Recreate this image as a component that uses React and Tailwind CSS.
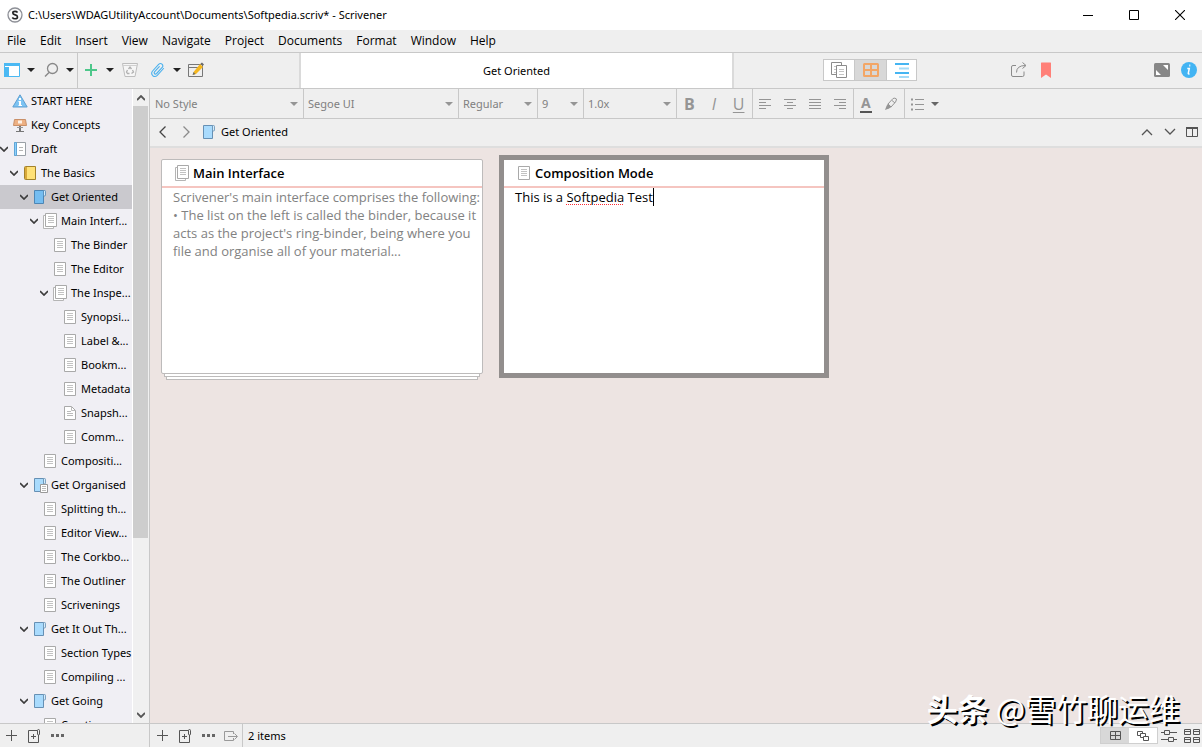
import clsx from 'clsx';

const MENUS = ['File', 'Edit', 'Insert', 'View', 'Navigate', 'Project', 'Documents', 'Format', 'Window', 'Help'];

const INDENTS = ['pl-0', 'pl-[10px]', 'pl-[20px]', 'pl-[30px]', 'pl-[40px]', 'pl-[50px]'];

const BINDER = [
  { title: 'START HERE', level: 0, icon: 'info' },
  { title: 'Key Concepts', level: 0, icon: 'easel' },
  { title: 'Draft', level: 0, icon: 'draft', open: true },
  { title: 'The Basics', level: 1, icon: 'book', open: true },
  { title: 'Get Oriented', level: 2, icon: 'folderDark', open: true, selected: true },
  { title: 'Main Interf...', level: 3, icon: 'stack', open: true },
  { title: 'The Binder', level: 4, icon: 'doc' },
  { title: 'The Editor', level: 4, icon: 'doc' },
  { title: 'The Inspe...', level: 4, icon: 'stack', open: true },
  { title: 'Synopsi...', level: 5, icon: 'doc' },
  { title: 'Label &...', level: 5, icon: 'doc' },
  { title: 'Bookm...', level: 5, icon: 'doc' },
  { title: 'Metadata', level: 5, icon: 'doc' },
  { title: 'Snapsh...', level: 5, icon: 'docFold' },
  { title: 'Comm...', level: 5, icon: 'doc' },
  { title: 'Compositi...', level: 3, icon: 'doc' },
  { title: 'Get Organised', level: 2, icon: 'folderDoc', open: true },
  { title: 'Splitting th...', level: 3, icon: 'doc' },
  { title: 'Editor View...', level: 3, icon: 'doc' },
  { title: 'The Corkbo...', level: 3, icon: 'doc' },
  { title: 'The Outliner', level: 3, icon: 'doc' },
  { title: 'Scrivenings', level: 3, icon: 'doc' },
  { title: 'Get It Out Th...', level: 2, icon: 'folder', open: true },
  { title: 'Section Types', level: 3, icon: 'doc' },
  { title: 'Compiling ...', level: 3, icon: 'doc' },
  { title: 'Get Going', level: 2, icon: 'folder', open: true },
  { title: 'Creatin...', level: 3, icon: 'doc' },
];

const Svg = ({ w = 16, h = 16, children, className }) => (
  <svg
    width={w}
    height={h}
    viewBox={`0 0 ${w} ${h}`}
    fill="none"
    aria-hidden="true"
    className={clsx('shrink-0', className)}
  >
    {children}
  </svg>
);

const folderShape = (fill, stroke = '#6690b4') => (
  <>
    <path d="M2.5 1.5h9v13h-9z" fill={fill} stroke={stroke} />
    <path d="M11.5 1.5h1.2q.8 0 .8 1v3.5q0 1-1 1t-1-1z" fill="#d5ecfb" stroke={stroke} strokeWidth=".8" />
  </>
);

const ITEM_ICONS = {
  info: (
    <>
      <path d="M8 1.8 15.2 14H.8z" fill="#7cc3f3" stroke="#5f9fd0" strokeLinejoin="round" />
      <path d="M7 5h2v2H7zM6.500 8H9v4h1v1H6.500v-1H7V9h-.5z" fill="#fff" />
    </>
  ),
  easel: (
    <>
      <path d="M8 8v6" stroke="#777" strokeWidth="2" />
      <path d="M4 14.500h8" stroke="#777" />
      <path d="M5 10.500h6" stroke="#999" />
      <path d="M2.500 2.500h11l1 6h-13z" fill="#edb083" stroke="#c98f68" />
      <path d="M6 3.500h4v3H6z" fill="#fdf1e6" />
    </>
  ),
  draft: (
    <>
      <path d="M2.500 1.500h11v13h-11z" fill="#fff" stroke="#9aa0a6" />
      <path d="M2.500 1.500h2v13h-2z" fill="#8fd0fa" stroke="#5fa6d8" />
      <path d="M7 6.500h4M7 9.500h4" stroke="#b5b5b5" />
    </>
  ),
  book: (
    <>
      <path d="M2.500 2.500q0-1 1-1h10v13h-10q-1 0-1-1z" fill="#ffe177" stroke="#a3822b" />
      <path d="M3 2h2v12H3z" fill="#d9a93a" />
    </>
  ),
  folder: folderShape('#a9dbfd'),
  folderDark: folderShape('#74bdf1', '#4d86b5'),
  folderDoc: (
    <>
      {folderShape('#a9dbfd')}
      <path d="M8.500 7.500h7v8h-7z" fill="#fff" stroke="#999" />
      <path d="M10 9.500h4M10 11.500h4M10 13.500h4" stroke="#bbb" />
    </>
  ),
  doc: (
    <>
      <path d="M2.500 1.500h11v13h-11z" fill="#fff" stroke="#a9a9a9" />
      <path d="M5 4.500h6M5 6.500h6M5 8.500h6M5 10.500h6" stroke="#c2c2c2" />
    </>
  ),
  docFold: (
    <>
      <path d="M2.500 1.500h7l4 4v9h-11z" fill="#fff" stroke="#a9a9a9" />
      <path d="M9.500 1.500v4h4M5 6.500h4M5 8.500h6M5 10.500h6" stroke="#bbb" />
    </>
  ),
  stack: (
    <>
      <path d="M1.500 2.500h10v13h-10z" fill="#fff" stroke="#b5b5b5" />
      <path d="M3.500 .5h11v13h-11z" fill="#fff" stroke="#a9a9a9" />
      <path d="M6 3.500h6M6 5.500h6M6 7.500h6M6 9.500h6" stroke="#c2c2c2" />
    </>
  ),
};

const ItemIcon = ({ name }) => <Svg>{ITEM_ICONS[name]}</Svg>;

const Caret = ({ className }) => (
  <Svg w={8} h={4} className={className}>
    <path d="M0 0h8L4 4z" fill="currentColor" />
  </Svg>
);

const IconButton = ({ label, className, children }) => (
  <button type="button" aria-label={label} className={clsx('flex items-center justify-center', className)}>
    {children}
  </button>
);

const TitleBar = () => (
  <header className="flex h-[30px] shrink-0 items-center bg-white pl-[7px]">
    <Svg>
      <circle cx="8" cy="8" r="7" fill="#fafafa" stroke="#8d8f96" strokeWidth="1.300" />
      <path
        d="M10.600 5.600Q9.600 4.400 8 4.400q-2.200 0-2.200 1.600 0 1.300 2.400 1.900 2.300.6 2.300 2 0 1.800-2.500 1.800-1.700 0-2.700-1.300"
        stroke="#222"
        strokeWidth="1.600"
      />
    </Svg>
    <h1 className="ml-[5px] flex-1 whitespace-nowrap">
      C:\Users\WDAGUtilityAccount\Documents\Softpedia.scriv* - Scrivener
    </h1>
    <IconButton label="Minimize" className="h-full w-[46px]">
      <Svg w={10} h={10}><path d="M0 5.500h10" stroke="#000" /></Svg>
    </IconButton>
    <IconButton label="Maximize" className="h-full w-[46px]">
      <Svg w={10} h={10}><path d="M.5.5h9v9h-9z" stroke="#000" /></Svg>
    </IconButton>
    <IconButton label="Close" className="h-full w-[45px]">
      <Svg w={10} h={10}><path d="m0 0 10 10M10 0 0 10" stroke="#000" strokeWidth="1.100" /></Svg>
    </IconButton>
  </header>
);

const MenuBar = () => (
  <nav className="flex h-[23px] shrink-0 items-center border-b border-[#c8c8c8] font-['Open_Sans',sans-serif] text-[12px]">
    {MENUS.map((menu) => (
      <button key={menu} type="button" className="px-[7px]">
        {menu}
      </button>
    ))}
  </nav>
);

const MainToolbar = () => (
  <div className="flex h-9 shrink-0 border-b border-[#c8c8c8]">
    <div className="flex w-[299px] shrink-0 items-center text-[#222]">
      <div className="flex h-full w-[78px] items-center border-r border-[#c8c8c8] pb-px pl-1">
        <IconButton label="Layouts">
          <Svg>
            <path d="M.5 1.500h15v13H.5z" fill="#fff" stroke="#4bb9f3" />
            <path d="M0 1h16v3H0zM0 5h5v10H0z" fill="#4bb9f3" />
          </Svg>
          <Caret className="ml-[7px]" />
        </IconButton>
        <IconButton label="Search" className="ml-[9px]">
          <Svg>
            <circle cx="8.500" cy="6.500" r="5" stroke="#888" strokeWidth="1.300" />
            <path d="m5 10.500-4 4" stroke="#888" strokeWidth="1.500" />
          </Svg>
          <Caret className="ml-[6px]" />
        </IconButton>
      </div>
      <div className="flex h-full items-center pb-px pl-[6px]">
        <IconButton label="Add">
          <Svg w={14} h={14}><path d="M7 1v12M1 7h12" stroke="#4dc78a" strokeWidth="2" /></Svg>
          <Caret className="ml-[8px]" />
        </IconButton>
        <IconButton label="Move to trash" className="ml-[8px]">
          <Svg>
            <path d="M.5 1.500h15l-2.500 13H3z" fill="#f6f6f6" stroke="#bdbdbd" />
            <path d="M1 3.500h14" stroke="#d0d0d0" />
            <path d="m6.500 7 1.500-2 1.500 2M10.500 8l1 2-2 1.500M7.500 11.500h-2l-1-1.500 1-2" stroke="#b0b0b0" strokeWidth="1.300" />
          </Svg>
        </IconButton>
        <IconButton label="Attach" className="ml-[12px]">
          <Svg>
            <path
              d="m13.500 6.500-6.200 6.800q-2.200 2.200-4.500.4-2.200-2.300-.2-4.700l6-6.600q1.700-1.600 3.400-.3 1.600 1.700.2 3.400l-5.600 6q-1 1-2 .2-.9-1 .1-2.100l4.600-5"
              stroke="#4bb1ee"
              strokeWidth="1.100"
              strokeLinecap="round"
            />
          </Svg>
          <Caret className="ml-[7px]" />
        </IconButton>
        <IconButton label="Compose" className="ml-[7px]">
          <Svg>
            <path d="M.5 2.500h14v12H.5zM1 5.500h11" stroke="#777" />
            <path d="m12 2 3 3-7 7-3 1 1-3.500z" fill="#f5b71f" />
            <path d="m12.500 1.500 1.500-1 2 2-1.500 1.500zM5.500 10l2 2-3 1z" fill="#6b6b6b" />
          </Svg>
        </IconButton>
      </div>
    </div>
    <div className="flex flex-1 items-center justify-center border-x-2 border-[#dadada] bg-white">Get Oriented</div>
    <div className="flex w-[468px] shrink-0 items-center pr-[5px] pb-px pl-[89px]">
      <div className="flex h-[22px] divide-x divide-[#c8c8c8] border border-[#c8c8c8] bg-white">
        <IconButton label="Scrivenings view" className="w-[31px]">
          <Svg>
            <path d="M.5.5h10v12H.5z" fill="#fff" stroke="#8c8c8c" />
            <path d="M3 4.500h4M3 7.500h4M3 10.500h4" stroke="#c4c4c4" />
            <path d="M5.500 3.500h10v12h-10z" fill="#fff" stroke="#8c8c8c" />
            <path d="M8 7.500h5M8 9.500h5M8 12.500h5" stroke="#c4c4c4" />
          </Svg>
        </IconButton>
        <IconButton label="Corkboard view" className="w-[32px] bg-[#d8d8d8]">
          <Svg>
            <rect x="1" y="2" width="14" height="12" rx=".5" stroke="#f3a666" strokeWidth="2" />
            <path d="M8 2v12M1 8h14" stroke="#f3a666" strokeWidth="2" />
          </Svg>
        </IconButton>
        <IconButton label="Outliner view" className="w-[29px]">
          <Svg>
            <path d="M1 2h14M1 11h14" stroke="#45b5f2" strokeWidth="2" />
            <path d="M5 6.500h10M5 15h10" stroke="#a4dbf8" strokeWidth="2" />
          </Svg>
        </IconButton>
      </div>
      <IconButton label="Export" className="ml-[94px]">
        <Svg>
          <path d="M5 3.500H2q-1.500 0-1.500 1.500v8q0 1.500 1.500 1.500h9.500q1.500 0 1.500-1.500V9.500" stroke="#8a8a8a" />
          <path d="M5.500 10.500q0-7 9-7M11.500.5l3.500 3-3.500 3" stroke="#8a8a8a" />
        </Svg>
      </IconButton>
      <IconButton label="Bookmarks" className="ml-[14px]">
        <Svg w={10}>
          <path d="M0 1q0-.5.500-.5h9q.5 0 .5.500v15l-5-3.500L0 16z" fill="#ff8078" />
        </Svg>
      </IconButton>
      <IconButton label="Full screen" className="ml-auto">
        <Svg>
          <rect y="1" width="16" height="14" rx="1.500" fill="#878787" />
          <path d="M9 3h5v5zM2 8l5 5H2z" fill="#fff" />
          <path d="m9.500 6.500 2 0 0 2M6.500 9.500l-2 0 0-2" stroke="#878787" />
        </Svg>
      </IconButton>
      <IconButton label="Inspector" className="ml-[11px]">
        <Svg>
          <circle cx="8" cy="8" r="8" fill="#43b4f3" />
          <path d="M9.300 3.200h-1M9.300 3.800h-1" stroke="#fff" strokeWidth="1.600" />
          <path d="M6.300 6.500h2l-1 4.700q-.2 1 1.200.6" stroke="#fff" strokeWidth="1.500" />
        </Svg>
      </IconButton>
    </div>
  </div>
);

const FormatSelect = ({ label, value, className }) => (
  <div className={clsx('grid items-center border-r border-[#c8c8c8]', className)}>
    <select
      aria-label={label}
      defaultValue={value}
      className="col-start-1 row-start-1 h-full w-full appearance-none bg-transparent pl-1 text-[#808080] outline-none"
    >
      <option>{value}</option>
    </select>
    <Caret className="pointer-events-none col-start-1 row-start-1 mr-[5px] justify-self-end text-[#959595]" />
  </div>
);

const ALIGNMENTS = [
  { label: 'Align left', d: 'M1 3.500h12M1 6.500h7M1 9.500h12M1 12.500h7' },
  { label: 'Align center', d: 'M1 3.500h12M4 6.500h6M1 9.500h12M4 12.500h6' },
  { label: 'Justify', d: 'M1 3.500h12M1 6.500h12M1 9.500h12M1 12.500h12' },
  { label: 'Align right', d: 'M1 3.500h12M6 6.500h7M1 9.500h12M6 12.500h7' },
];

const FormatBar = () => (
  <div className="flex h-[30px] shrink-0 border-b border-[#c8c8c8] text-[#959595]">
    <FormatSelect label="Style" value="No Style" className="w-[154px] pl-[1px]" />
    <FormatSelect label="Font" value="Segoe UI" className="w-[155px]" />
    <FormatSelect label="Weight" value="Regular" className="w-[79px]" />
    <FormatSelect label="Size" value="9" className="w-[46px]" />
    <FormatSelect label="Line spacing" value="1.0x" className="w-[93px]" />
    <div className="flex w-[76px] items-center justify-around border-r border-[#c8c8c8] pr-px font-['Open_Sans',sans-serif] text-base">
      <button type="button" className="w-5 font-bold">B</button>
      <button type="button" className="w-5 font-medium italic">I</button>
      <button type="button" className="w-5 underline underline-offset-2">U</button>
    </div>
    <div className="flex w-[101px] items-center justify-around border-r border-[#c8c8c8] pr-px">
      {ALIGNMENTS.map(({ label, d }) => (
        <IconButton key={label} label={label}>
          <Svg w={14}><path d={d} stroke="currentColor" /></Svg>
        </IconButton>
      ))}
    </div>
    <div className="flex w-[51px] items-center justify-around border-r border-[#c8c8c8]">
      <button type="button" className="h-[18px] border-b-2 border-[#555] px-px text-sm leading-4 font-bold">
        A
      </button>
      <IconButton label="Highlight">
        <Svg w={14} h={14}>
          <path d="m4 7 5-5.500q2-1 3.500.5-.5 2.500-1 3L7 10z" stroke="#959595" />
          <path d="M4 6.500 7.500 10 5 11.500 1 13l1.500-4z" fill="#959595" />
          <path d="M8 3.500 11 6" stroke="#959595" />
        </Svg>
      </IconButton>
    </div>
    <IconButton label="List" className="ml-[5px]">
      <Svg w={14}>
        <path d="M5 3.500h9M5 8.500h9M5 13.500h9" stroke="#959595" />
        <path d="M1 2.500h2v2H1zM1 7.500h2v2H1zM1 12.500h2v2H1z" fill="#959595" />
      </Svg>
      <Caret className="ml-[7px] text-[#666]" />
    </IconButton>
  </div>
);

const EditorHeader = () => (
  <div className="flex h-[29px] shrink-0 items-center border-b-2 border-[#dedede] pr-[4px] pb-[2px] pl-[9px]">
    <IconButton label="Back">
      <Svg w={8} h={12}><path d="M6.500.5 1 6l5.500 5.500" stroke="#444" strokeWidth="1.300" /></Svg>
    </IconButton>
    <IconButton label="Forward" className="ml-[15px]">
      <Svg w={8} h={12}><path d="M1.500.5 7 6l-5.500 5.500" stroke="#8b8b8b" strokeWidth="1.300" /></Svg>
    </IconButton>
    <span className="ml-[11px] flex items-center gap-[4px]">
      <ItemIcon name="folder" />
      Get Oriented
    </span>
    <IconButton label="Previous document" className="ml-auto">
      <Svg w={12} h={8}><path d="m1 7 5-5 5 5" stroke="#555" strokeWidth="1.300" /></Svg>
    </IconButton>
    <IconButton label="Next document" className="ml-[11px]">
      <Svg w={12} h={8}><path d="m1 1 5 5 5-5" stroke="#555" strokeWidth="1.300" /></Svg>
    </IconButton>
    <IconButton label="Split editor" className="ml-[10px]">
      <Svg w={12} h={10}>
        <path d="M.5.5h11v9H.5zM6.500 1v8" stroke="#555" />
        <path d="M0 1h12" stroke="#555" strokeWidth="2" />
      </Svg>
    </IconButton>
  </div>
);

const BinderRow = ({ item }) => (
  <li className={clsx('h-6', item.selected && 'bg-[#cac9ce]')}>
    <a href="#" className={clsx('flex h-full items-center whitespace-nowrap', INDENTS[item.level])}>
      <Svg w={8} h={6} className="mr-[4px]">
        {item.open && <path d="m0 1 4 4 4-4" stroke="#3c3c3c" strokeWidth="1.700" />}
      </Svg>
      <ItemIcon name={item.icon} />
      <span className="ml-[3px]">{item.title}</span>
    </a>
  </li>
);

const Scrollbar = () => (
  <div className="flex w-[17px] shrink-0 flex-col border-l border-white bg-[#f0f0f0] pr-px">
    <IconButton label="Scroll up" className="h-[17px]">
      <Svg w={8} h={6}><path d="m0 5 4-4 4 4" stroke="#555" strokeWidth="1.800" /></Svg>
    </IconButton>
    <div className="min-h-0 flex-1">
      <div className="h-[72%] bg-[#cdcdcd]" />
    </div>
    <IconButton label="Scroll down" className="h-[17px]">
      <Svg w={8} h={6}><path d="m0 1 4 4 4-4" stroke="#555" strokeWidth="1.800" /></Svg>
    </IconButton>
  </div>
);

const FooterActions = () => (
  <>
    <IconButton label="Add item">
      <Svg w={11} h={11}><path d="M5.500 0v11M0 5.500h11" stroke="#555" /></Svg>
    </IconButton>
    <IconButton label="Add folder" className="ml-[11px]">
      <Svg w={13} h={14}>
        <path d="M9.500 1.500h-9v12h10V6M5.500 5v5M3 7.500h5" stroke="#555" />
        <path d="M9.500 1.500q0-1 1-1t1 1V5q0 1-1 1t-1-1z" stroke="#555" />
      </Svg>
    </IconButton>
    <IconButton label="More actions" className="ml-[10px]">
      <Svg w={13} h={3}>
        <path d="M0 0h3v3H0zM5 0h3v3H5zM10 0h3v3h-3z" fill="#666" />
      </Svg>
    </IconButton>
  </>
);

const Binder = () => (
  <aside className="flex w-[150px] shrink-0 flex-col border-r border-[#c8c8c8]">
    <div className="flex min-h-0 flex-1">
      <ul className="min-w-0 flex-1 overflow-hidden bg-[#f0eff4]">
        {BINDER.map((item) => (
          <BinderRow key={item.title} item={item} />
        ))}
      </ul>
      <Scrollbar />
    </div>
    <div className="flex h-6 shrink-0 items-center border-t border-[#c8c8c8] pl-[6px]">
      <FooterActions />
    </div>
  </aside>
);

const Card = ({ icon, title, selected, children }) => (
  <article
    className={clsx(
      'h-[215px] border bg-white',
      selected ? 'border-[#928e8d] ring-4 ring-[#928e8d]' : 'rounded-xs border-[#bdbbbb]',
    )}
  >
    <h2 className="flex h-[28px] items-center gap-[3px] border-b-2 border-[#f5c5c0] pl-[12px] font-semibold">
      <ItemIcon name={icon} />
      {title}
    </h2>
    {children}
  </article>
);

const Corkboard = () => (
  <main className="flex min-h-0 flex-1 flex-wrap content-start gap-5 overflow-hidden bg-[#ede4e2] p-[11px] font-['Open_Sans',sans-serif] text-[13px] leading-[18px]">
    <div className="w-[322px]">
      <Card icon="stack" title="Main Interface">
        <p className="pl-[11px] whitespace-nowrap text-[#828282]">
          Scrivener's main interface comprises the following:
          <br />• The list on the left is called the binder, because it
          <br />acts as the project's ring-binder, being where you
          <br />file and organise all of your material...
        </p>
      </Card>
      <div className="mx-[3px] h-[3px] border-x border-b border-[#bdbbbb] bg-white" />
      <div className="mx-[5px] h-[3px] border-x border-b border-[#bdbbbb] bg-white" />
    </div>
    <div className="w-[322px]">
      <Card icon="doc" title="Composition Mode" selected>
        <div
          role="textbox"
          aria-label="Synopsis"
          contentEditable
          suppressContentEditableWarning
          className="flex pl-[11px] outline-none"
        >
          <p className="border-r border-black">
            This is a{' '}
            <span className="underline decoration-red-500 decoration-dotted decoration-1 underline-offset-2">
              Softpedia
            </span>{' '}
            Test
          </p>
        </div>
      </Card>
    </div>
  </main>
);

const EditorFooter = () => (
  <footer className="flex h-6 shrink-0 items-center border-t border-[#c8c8c8] pr-[2px] pl-[7px]">
    <FooterActions />
    <IconButton label="Open in other editor" className="ml-[9px]">
      <Svg w={14} h={10}>
        <path d="M9.500 3V.5h-9v9h9V7M4 5.500h9M10.500 2.500l3 3-3 3" stroke="#999" />
      </Svg>
    </IconButton>
    <span className="ml-[4px] flex h-full items-center border-l border-[#c8c8c8] pl-[5px]">2 items</span>
    <div className="ml-auto flex h-[17px] border border-[#cfcfcf] bg-white">
      <IconButton label="Arrange in grid" className="w-[28px] bg-[#d8d8d8]">
        <Svg w={11} h={9}><path d="M.5.5h10v8H.5zM5.500 0v9M0 4.500h11" stroke="#555" /></Svg>
      </IconButton>
      <IconButton label="Arrange freely" className="w-[28px]">
        <Svg w={12} h={10}>
          <path d="M.5.5h5v4h-5z" fill="#fff" stroke="#555" />
          <path d="M3.500 2.500h5v4h-5z" fill="#fff" stroke="#555" />
          <path d="M6.500 5.500h5v4h-5z" fill="#fff" stroke="#555" />
        </Svg>
      </IconButton>
    </div>
    <IconButton label="Card options" className="ml-[3px]">
      <Svg h={12}>
        <path d="M0 2.500h3M9 2.500h7M0 9.500h7M13 9.500h3M3.500.5h5v4h-5zM7.500 7.500h5v4h-5z" stroke="#555" />
      </Svg>
    </IconButton>
    <IconButton label="Card size" className="ml-[7px]">
      <Svg h={14}>
        <path
          d="M.5.5h6v5h-6zM9.500.5h6v5h-6zM.5 8.500h6v5h-6zM9.500 8.500h6v5h-6zM1 2.500h5M10 2.500h5M1 10.500h5M10 10.500h5"
          stroke="#555"
        />
      </Svg>
    </IconButton>
  </footer>
);

export default function App() {
  return (
    <div className="relative flex h-screen flex-col overflow-hidden bg-[#efefef] font-['Noto_Sans','Noto_Sans_CJK_SC',sans-serif] text-[11px] leading-4 text-black">
      <TitleBar />
      <MenuBar />
      <MainToolbar />
      <div className="flex min-h-0 flex-1">
        <Binder />
        <section className="flex min-w-0 flex-1 flex-col">
          <FormatBar />
          <EditorHeader />
          <Corkboard />
          <EditorFooter />
        </section>
      </div>
      <p className="pointer-events-none absolute right-[22px] bottom-[18px] font-['Noto_Sans_CJK_SC',sans-serif] text-[31px] leading-[42px] whitespace-nowrap text-white [text-shadow:2px_2px_0_#000]">
        <span className="font-bold">头条</span> @雪竹聊运维
      </p>
    </div>
  );
}
